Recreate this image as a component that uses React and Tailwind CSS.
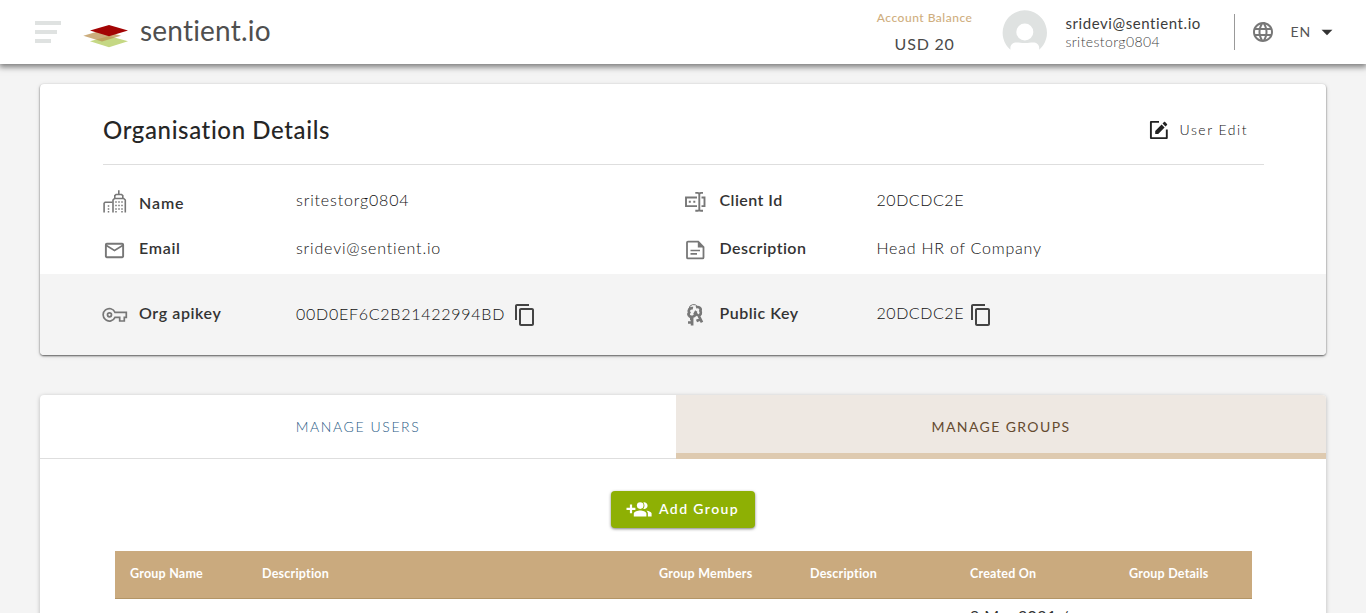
import { MdArrowDropDown, MdContentCopy, MdLanguage, MdMailOutline } from "react-icons/md";

function Logo() {
  return (
    <div className="flex items-center">
      <svg className="mt-[8px] h-6 w-12" viewBox="0 0 48 24" aria-hidden="true">
        <path d="M7 17.3 26 12 45 17.3 26 23.2Z" fill="#c5d884" />
        <path d="M0.3 11.8 19 6.2 38 11.8 19 17.4Z" fill="#bb9152" fillOpacity="0.75" />
        <path d="M7 6.5 26 1 45 6.5 26 12.2Z" fill="#a30404" />
      </svg>
      <span className="ml-[9px] pb-[4px] text-[28px] leading-8 tracking-[0.2px] text-[#4f4f4f]">sentient.io</span>
    </div>
  );
}

function Avatar() {
  return (
    <svg className="mt-px h-[46px] w-[46px]" viewBox="0 0 46 46" aria-hidden="true">
      <path
        d="M22.5 0.3a22.5 22.5 0 0 1 14.7 39.5V38c0-3.6-2.6-5.6-6.2-5.6-2.6 0-4.6.7-8.2.7s-5.6-.7-8.2-.7c-3.6 0-6.2 2-6.2 5.6v1.8A22.5 22.5 0 0 1 22.5.3Z"
        fill="#dfe2e1"
      />
      <circle cx="22.8" cy="22" r="8.5" fill="#fff" />
    </svg>
  );
}

function EditIcon() {
  return (
    <svg className="-ml-px h-5 w-5" viewBox="0 0 20 20" fill="none" aria-hidden="true">
      <path d="M10 1.9H1.9v16.2h15.9V9.5" stroke="#222" strokeWidth="1.9" strokeLinejoin="round" />
      <path d="M6.2 10.9v3h3l6.4-6.5-3-3ZM13.5 3.5l3 3 1.5-1.5c.3-.3.3-.8 0-1.1l-1.9-1.9c-.3-.3-.8-.3-1.1 0Z" fill="#222" />
    </svg>
  );
}

function BuildingIcon() {
  return (
    <svg className="h-6 w-6" viewBox="0 0 24 24" fill="none" stroke="#777" strokeWidth="1.6" aria-hidden="true">
      <path d="M1.1 22.5V13.3l1-1h7M10 22.5V10l1.500-1.500h9.200l1.600 1.500v12.500M11.800 8.500V5.700l1.300-1.200h5.400l1.300 1.200v2.800M15.800 4.500V.3" />
      <path
        d="M5.500 15.200v1.500M5.500 18.200v1.500M13 11.200v1.500M16 11.200v1.500M19 11.200v1.500M13 14.700v1.500M16 14.700v1.500M19 14.700v1.500M13 18.200v1.500M16 18.200v1.500M19 18.200v1.500M5.500 21v1.500M13 21v1.500M19 21v1.500"
        strokeWidth="1.5"
      />
    </svg>
  );
}

function ClientIcon() {
  return (
    <svg className="-ml-px h-6 w-6" viewBox="0 0 24 24" fill="none" stroke="#777" strokeWidth="1.9" aria-hidden="true">
      <path d="M14 7.5H3v8.6h11M18.5 7.5h3v8.6h-3" />
      <path d="M12.3 2.9h2.3c1.2 0 1.7.5 1.7 1.3 0-.8.5-1.3 1.7-1.3h2M12.3 20.8h2.3c1.2 0 1.7-.5 1.7-1.3 0 .8.5 1.3 1.7 1.3h2M16.3 3.5v17" />
      <path d="M5.8 11.8h2M10.3 11.8h2" strokeWidth="2" />
    </svg>
  );
}

function DocumentIcon() {
  return (
    <svg className="-ml-px h-6 w-6" viewBox="0 0 24 24" fill="none" stroke="#777" strokeWidth="1.8" aria-hidden="true">
      <path d="M15.2 3.6H5q-1 0-1 1v14.8q0 1 1 1h14.5q1 0 1-1V9.2Z" />
      <path d="M14.8 3.6v5.9h6Z" fill="#777" stroke="none" />
      <path d="M7.5 12.5h9.5M7.5 15.8h6.5" strokeWidth="1.7" />
    </svg>
  );
}

function KeyIcon() {
  return (
    <svg className="-ml-px h-6 w-[26px]" viewBox="0 0 26 24" fill="none" stroke="#777" strokeWidth="1.7" aria-hidden="true">
      <path d="M13 9.3a6.2 6.2 0 1 0 0 5h4.7v3.7h4.6v-3.7h2V9.3Z" />
      <circle cx="7.5" cy="11.8" r="2" />
    </svg>
  );
}

function KeysIcon() {
  return (
    <svg className="-ml-px h-6 w-6" viewBox="0 0 24 24" fill="none" stroke="#777" aria-hidden="true">
      <path d="M6 6a4.6 4.6 0 0 1 8.7-2" strokeWidth="1" />
      <path d="M10 5.2C6.2 4.5 5 7.8 6.2 9.5c-1.3 1.5-.6 4.5 2.9 4.3V22.5M9 19.5H5M9 15.8H7M10 13.5c2.5-.5 2.500-3 1-4" strokeWidth="2.7" />
      <path d="M13 4.2c3-.8 5.5 1 4.400 3.700 1.200 2.200.2 4.200-1.800 4.600l3.400 6.900M14.500 12c-1.800-.8-2.200-2.500-1.300-4M16.800 16.500l-3.300 1.500" strokeWidth="2.7" />
    </svg>
  );
}

function AddGroupIcon() {
  return (
    <svg className="-mt-px h-4 w-[26px]" viewBox="0 0 26 16" fill="#fff" aria-hidden="true">
      <path d="M9.4 6.7H6.1V3.4H3.9v3.3H.5v2.2h3.4v3.3h2.2V8.9h3.3Z" />
      <circle cx="14.2" cy="4.6" r="3.3" />
      <path d="M17.3 1.5a3.3 3.3 0 1 1 0 6.300 5.300 5.300 0 0 0 0-6.300ZM14.200 9.400c-2.200 0-6.400 1.100-6.400 3.200v3h12.600v-3c0-2.100-4-3.200-6.200-3.200ZM20.300 9.700c1 .8 1.600 1.700 1.600 2.900v3h3.700v-3c0-1.700-2.900-2.700-5.300-2.900Z" />
    </svg>
  );
}

function Detail({ icon, label, labelClass, value, valueClass, copy }) {
  return (
    <div className="flex h-6 items-center">
      <div className="flex w-9 shrink-0 items-center">{icon}</div>
      <div className={`w-[157px] shrink-0 text-base leading-6 font-semibold text-[#333] ${labelClass}`}>{label}</div>
      <div className={`text-base leading-6 font-light text-[#111] ${valueClass}`}>{value}</div>
      {copy && <MdContentCopy className="shrink-0 text-[#444]" size={24} />}
    </div>
  );
}

export default function App() {
  return (
    <div className="flex h-[613px] flex-col overflow-hidden bg-[#f4f4f4] font-['Lato','Noto_Sans',sans-serif]">
      <header className="z-10 flex h-16 shrink-0 items-center justify-between bg-white pr-[26px] pl-[35px] shadow-[0_2px_6px_1px_rgba(0,0,0,0.5)]">
        <div className="flex items-center">
          <div className="mr-[22px] flex w-[26px] flex-col gap-[5px]">
            <span className="h-1 w-[26px] bg-[#dfe2e1]" />
            <span className="h-1 w-[22px] bg-[#dfe2e1]" />
            <span className="h-1 w-4 bg-[#dfe2e1]" />
          </div>
          <Logo />
        </div>
        <div className="flex items-center">
          <div className="mr-[30px] flex flex-col items-center pt-px">
            <span className="text-xs leading-4 font-medium tracking-[0.5px] text-[#cfae7e]">Account Balance</span>
            <span className="mt-[6px] text-base leading-6 tracking-[0.8px] text-[#4a4a4a]">USD 20</span>
          </div>
          <Avatar />
          <div className="ml-[17px] flex w-[169px] flex-col">
            <span className="text-[15px] leading-5 tracking-[0.58px] text-[#3c3c3c]">sridevi@sentient.io</span>
            <span className="text-sm leading-[18px] font-light tracking-[0.4px] text-[#444]">sritestorg0804</span>
          </div>
          <div className="h-9 w-px bg-[#999]" />
          <MdLanguage className="ml-4 text-[#777]" size={24} />
          <span className="ml-[15px] text-sm leading-5 tracking-[0.9px] text-[#555]">EN</span>
          <MdArrowDropDown className="ml-[3px] text-[#333]" size={26} />
        </div>
      </header>

      <main className="flex flex-1 flex-col gap-10 px-10 pt-5">
        <section className="shrink-0 overflow-hidden rounded-[4px] bg-white shadow-[0_1px_2px_rgba(0,0,0,0.6),0_1px_5px_rgba(0,0,0,0.12)]">
          <div className="h-[190px] pr-[62px] pl-[63px]">
            <div className="flex h-[81px] items-center justify-between border-b border-[#dedede] pt-3 pr-4">
              <h1 className="text-2xl leading-8 font-medium tracking-[0.62px] text-[#262626]">Organisation Details</h1>
              <button className="flex items-center gap-[11px] text-sm leading-5 font-light tracking-[1.5px] text-[#111]">
                <EditIcon />
                User Edit
              </button>
            </div>
            <div className="grid grid-cols-2 gap-y-6 pt-[25px]">
              <Detail
                icon={<BuildingIcon />}
                label="Name"
                labelClass="pt-px tracking-[0.9px]"
                value="sritestorg0804"
                valueClass="pb-[5px] tracking-[0.84px]"
              />
              <Detail
                icon={<ClientIcon />}
                label="Client Id"
                labelClass="pb-[5px] tracking-[0.45px]"
                value="20DCDC2E"
                valueClass="pb-[5px] tracking-[0.55px]"
              />
              <Detail
                icon={<MdMailOutline className="text-[#777]" size={23} />}
                label="Email"
                labelClass="pb-[5px] tracking-[0.7px]"
                value="sridevi@sentient.io"
                valueClass="pb-[5px] tracking-[0.82px]"
              />
              <Detail
                icon={<DocumentIcon />}
                label="Description"
                labelClass="pb-[5px] tracking-[0.45px]"
                value="Head HR of Company"
                valueClass="pb-[5px] tracking-[0.78px]"
              />
            </div>
          </div>
          <div className="grid h-[81px] grid-cols-2 items-center bg-[#f4f4f4] pr-[62px] pl-[63px]">
            <Detail
              icon={<KeyIcon />}
              label="Org apikey"
              labelClass="pb-[3px] tracking-[0.6px]"
              value="00D0EF6C2B21422994BD"
              valueClass="w-[217px] pb-px tracking-[0.74px]"
              copy
            />
            <Detail
              icon={<KeysIcon />}
              label="Public Key"
              labelClass="pb-[3px] tracking-[0.5px]"
              value="20DCDC2E"
              valueClass="w-[92px] pb-[3px] tracking-[0.55px]"
              copy
            />
          </div>
        </section>

        <section className="flex-1 rounded-t-[4px] bg-white shadow-[0_1px_4px_rgba(0,0,0,0.25)]">
          <div className="flex h-16 text-sm">
            <div className="flex w-[636px] items-center justify-center border-b border-[#dedede] font-light tracking-[1.6px] text-[#1f5a85]">
              MANAGE USERS
            </div>
            <div className="flex flex-1 items-center justify-center rounded-tr-[4px] border-b-[6px] border-[#decab0] bg-[#eee8e2] pt-[6px] tracking-[1.4px] text-[#654b30]">
              MANAGE GROUPS
            </div>
          </div>
          <div className="flex justify-center pt-8">
            <button className="flex h-[37px] w-36 items-center gap-[7px] rounded-[4px] bg-[#8eb004] pb-px pl-[15px] text-sm font-semibold tracking-[1.4px] text-white shadow-[0_1px_3px_rgba(0,0,0,0.5)]">
              <AddGroupIcon />
              Add Group
            </button>
          </div>
          <div className="mt-[23px] mr-[74px] ml-[75px]">
            <div className="grid h-12 grid-cols-[132px_397px_151px_160px_159px_1fr] items-center border-b border-[#b39566] bg-[#caaa7e] pl-[15px] text-[12.5px] font-bold tracking-[0.22px] text-white">
              <span>Group Name</span>
              <span>Description</span>
              <span>Group Members</span>
              <span>Description</span>
              <span>Created On</span>
              <span>Group Details</span>
            </div>
            <div className="grid h-12 grid-cols-[132px_397px_151px_160px_159px_1fr] pt-[5px] pl-[15px] text-base leading-6 tracking-[0.4px] text-[#333]">
              <span className="col-start-5">9 Mar 2021 /</span>
            </div>
          </div>
        </section>
      </main>
    </div>
  );
}
